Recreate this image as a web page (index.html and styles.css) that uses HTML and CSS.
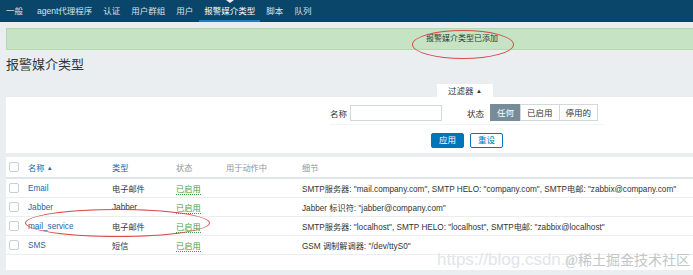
FILE: index.html
```html
<!DOCTYPE html>
<html lang="zh-CN">
<head>
    <meta charset="UTF-8" />
    <title>报警媒介类型</title>
    <link rel="stylesheet" href="styles.css">
</head>
<body>
<div class="page">
    <nav class="top-nav">
        <a href="#">一般</a>
        <a href="#">agent代理程序</a>
        <a href="#">认证</a>
        <a href="#">用户群组</a>
        <a href="#">用户</a>
        <a href="#" class="active">报警媒介类型</a>
        <a href="#">脚本</a>
        <a href="#">队列</a>
    </nav>

    <div class="content">
        <div class="msg-good">报警媒介类型已添加</div>

        <h1>报警媒介类型</h1>

        <div class="filter-tab-row">
            <span class="filter-tab">过滤器 <span class="arrow">▲</span></span>
        </div>
        <div class="filter-box">
            <div class="filter-row">
                <label for="filterName">名称</label>
                <input type="text" id="filterName">
                <span class="filter-label">状态</span>
                <div class="radio-seg">
                    <span class="seg on">任何</span>
                    <span class="seg">已启用</span>
                    <span class="seg">停用的</span>
                </div>
            </div>
            <div class="filter-buttons">
                <button class="btn-apply">应用</button>
                <button class="btn-reset">重设</button>
            </div>
        </div>

        <div class="table-box">
            <table class="list-table">
                <thead>
                    <tr>
                        <th class="col-check"><span class="cb"></span></th>
                        <th class="col-name"><a href="#">名称</a> <span class="sort">▲</span></th>
                        <th class="col-type"><a href="#">类型</a></th>
                        <th class="col-status">状态</th>
                        <th class="col-action">用于动作中</th>
                        <th>细节</th>
                    </tr>
                </thead>
                <tbody>
                    <tr>
                        <td><span class="cb"></span></td>
                        <td><a href="#">Email</a></td>
                        <td>电子邮件</td>
                        <td><a href="#" class="enabled">已启用</a></td>
                        <td></td>
                        <td>SMTP服务器: "mail.company.com", SMTP HELO: "company.com", SMTP电邮: "zabbix@company.com"</td>
                    </tr>
                    <tr>
                        <td><span class="cb"></span></td>
                        <td><a href="#">Jabber</a></td>
                        <td>Jabber</td>
                        <td><a href="#" class="enabled">已启用</a></td>
                        <td></td>
                        <td>Jabber 标识符: "jabber@company.com"</td>
                    </tr>
                    <tr>
                        <td><span class="cb"></span></td>
                        <td><a href="#">mail_service</a></td>
                        <td>电子邮件</td>
                        <td><a href="#" class="enabled">已启用</a></td>
                        <td></td>
                        <td>SMTP服务器: "localhost", SMTP HELO: "localhost", SMTP电邮: "zabbix@localhost"</td>
                    </tr>
                    <tr>
                        <td><span class="cb"></span></td>
                        <td><a href="#">SMS</a></td>
                        <td>短信</td>
                        <td><a href="#" class="enabled">已启用</a></td>
                        <td></td>
                        <td>GSM 调制解调器: "/dev/ttyS0"</td>
                    </tr>
                </tbody>
            </table>
        </div>
    </div>

    <!-- red hand-drawn marks over the screenshot -->
    <span class="mark mark-msg"></span>
    <span class="mark mark-row"></span>
    <div class="watermark"><span class="wm-url">https://blog.csdn.n</span><span class="wm-name">@稀土掘金技术社区</span></div>
</div>
</body>
</html>
```

FILE: styles.css
```css
html, body {
    margin: 0;
    padding: 0;
    overflow: hidden;
    background-color: #ebeef0;
}

body {
    font-family: Arial, 'Liberation Sans', 'Noto Sans CJK SC', sans-serif;
    font-size: 8.5px;
    color: #1f2c33;
}

.page {
    position: relative;
    width: 918px;
    height: 275px;
}

a {
    color: #1f65a6;
    text-decoration: none;
}

.top-nav {
    position: relative;
    display: flex;
    height: 22px;
    padding-left: 1px;
    background-color: #0a466a;
}

.top-nav a {
    position: relative;
    display: flex;
    align-items: center;
    padding: 0 5px;
    margin-right: 1px;
    color: #d7e2ea;
    font-size: 8.5px;
    border-bottom: 2px solid transparent;
}

.top-nav a:first-child {
    margin-right: 4px;
}

.top-nav a.active {
    color: #ffffff;
    border-bottom-color: #1f7fc0;
}

.top-nav a.active::before {
    content: "";
    position: absolute;
    top: 0;
    left: 50%;
    margin-left: -4px;
    border-left: 4px solid transparent;
    border-right: 4px solid transparent;
    border-top: 3px solid #ebeef0;
}

.content {
    padding: 6px 0 0 6px;
}

.msg-good {
    height: 20px;
    line-height: 20px;
    text-align: center;
    background-color: #c6e4c3;
    border: 1px solid #b4d8b0;
    color: #2b3a2b;
    font-size: 8px;
}

h1 {
    margin: 5px 0 0 0;
    font-size: 13px;
    font-weight: normal;
    color: #30383d;
    line-height: 20px;
}

.filter-tab-row {
    display: flex;
    justify-content: center;
    margin-top: 9px;
    padding-left: 6px;
}

.filter-tab {
    background-color: #fff;
    padding: 0 11px;
    height: 13px;
    line-height: 14px;
    font-size: 8.5px;
    color: #333;
}

.filter-tab .arrow {
    font-size: 6px;
    vertical-align: 1px;
}

.filter-box {
    background-color: #fff;
    height: 56px;
    padding-top: 7px;
    box-sizing: border-box;
}

.filter-row {
    display: flex;
    align-items: center;
    margin-left: 324px;
    width: 275px;
    padding-bottom: 3px;
    border-bottom: 1px solid #f2f4f5;
    white-space: nowrap;
}

.filter-row label,
.filter-label {
    flex-shrink: 0;
    font-size: 8.5px;
    color: #333;
}

.filter-row input {
    flex-shrink: 0;
    width: 92px;
    height: 16px;
    margin: 0 25px 0 3px;
    padding: 0;
    border: 1px solid #d3d8db;
    box-sizing: border-box;
}

.radio-seg {
    display: flex;
    flex-shrink: 0;
    margin-left: 6px;
}

.seg {
    height: 17px;
    line-height: 16px;
    padding: 0 6px;
    border: 1px solid #d3d8db;
    margin-left: -1px;
    font-size: 8.5px;
    color: #333;
    box-sizing: border-box;
}

.seg.on {
    background-color: #768d99;
    border-color: #768d99;
    color: #fff;
    margin-left: 0;
}

.filter-buttons {
    display: flex;
    margin: 8px 0 0 425px;
    gap: 6px;
}

.filter-buttons button {
    height: 15px;
    padding: 0 7px;
    border-radius: 2px;
    font-size: 8.5px;
    font-family: inherit;
    line-height: 13px;
    cursor: pointer;
}

.btn-apply {
    background-color: #0275b8;
    border: 1px solid #0275b8;
    color: #fff;
}

.btn-reset {
    background-color: #fff;
    border: 1px solid #0275b8;
    color: #0275b8;
}

.table-box {
    margin-top: 4px;
    background-color: #fff;
    height: 113px;
}

.list-table {
    border-collapse: collapse;
    width: 100%;
    font-size: 8.2px;
}

.list-table th,
.list-table td {
    text-align: left;
    white-space: nowrap;
    padding: 0;
    height: 18px;
    border-bottom: 1px solid #ebeef0;
}

.list-table th {
    height: 20px;
    font-weight: normal;
    color: #8c9498;
    border-bottom: 2px solid #dfe4e7;
}

.list-table td {
    color: #333;
}

.col-check { width: 22px; }
.col-name { width: 84px; }
.col-type { width: 64px; }
.col-status { width: 50px; }
.col-action { width: 76px; }

.cb {
    display: block;
    width: 10px;
    height: 10px;
    margin-left: 3px;
    border: 1px solid #c8ced1;
    border-radius: 2px;
    box-sizing: border-box;
}

.sort {
    color: #1f65a6;
    font-size: 6px;
    vertical-align: 1px;
}

.enabled {
    color: #429e47;
    border-bottom: 1px dotted #429e47;
}

.mark {
    position: absolute;
    border: 1px solid #d94a4a;
    border-radius: 50%;
}

.mark-msg {
    left: 412px;
    top: 30px;
    width: 100px;
    height: 27px;
}

.mark-row {
    left: 25px;
    top: 209px;
    width: 183px;
    height: 26px;
}

.watermark {
    position: absolute;
    left: 437px;
    top: 249px;
    white-space: nowrap;
}

.wm-url {
    font-size: 17px;
    color: #e2e5e7;
}

.wm-name {
    font-family: 'Liberation Serif', 'Noto Sans CJK SC', serif;
    font-size: 14px;
    color: #c2c6c9;
    margin-left: -10px;
}
```
